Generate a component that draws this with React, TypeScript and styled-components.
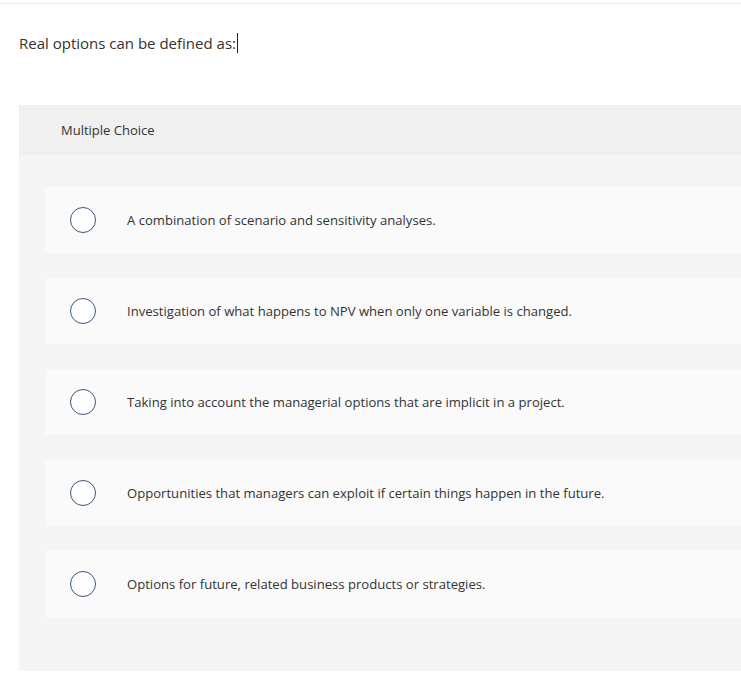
import React from "react";
import styled, { createGlobalStyle } from "styled-components";

const GlobalStyle = createGlobalStyle`
  html, body {
    margin: 0;
    padding: 0;
    background: #ffffff;
    font-family: "Open Sans", "Liberation Sans", sans-serif;
    color: #333333;
  }
`;

const Page = styled.div`
  width: 741px;
  height: 686px;
  overflow: hidden;
  border-top: 1px solid #ececec;
  margin-top: 3px;
  box-sizing: border-box;
`;

const Question = styled.div`
  padding: 6px 0 0 19px;
  height: 72px;
  box-sizing: border-box;
  font-size: 15px;
  color: #333;
  display: flex;
  align-items: center;
  line-height: 20px;
`;

const Cursor = styled.span`
  display: inline-block;
  width: 1px;
  height: 20px;
  background: #222;
  margin-left: 1px;
`;

const Panel = styled.div`
  margin: 29px 0 0 19px;
  background: #f5f5f5;
  padding-bottom: 54px;
`;

const PanelHeader = styled.div`
  height: 50px;
  background: #f0f0f0;
  display: flex;
  align-items: center;
  padding-left: 42px;
  font-size: 13px;
  color: #333;
`;

const OptionList = styled.div`
  display: flex;
  flex-direction: column;
  gap: 25px;
  padding: 32px 0 0 26px;
`;

const Option = styled.label`
  height: 66px;
  background: #fafafa;
  display: flex;
  align-items: center;
  padding-left: 25px;
  font-size: 13.1px;
  color: #333;
  cursor: pointer;
`;

const Radio = styled.span`
  width: 24px;
  height: 24px;
  border: 1.5px solid #3b5877;
  border-radius: 50%;
  background: #ffffff;
  flex-shrink: 0;
  margin-right: 31px;
`;

const options = [
  "A combination of scenario and sensitivity analyses.",
  "Investigation of what happens to NPV when only one variable is changed.",
  "Taking into account the managerial options that are implicit in a project.",
  "Opportunities that managers can exploit if certain things happen in the future.",
  "Options for future, related business products or strategies.",
];

const App: React.FC = () => {
  return (
    <Page>
      <GlobalStyle />
      <Question>
        Real options can be defined as:
        <Cursor />
      </Question>
      <Panel>
        <PanelHeader>Multiple Choice</PanelHeader>
        <OptionList>
          {options.map((text) => (
            <Option key={text}>
              <Radio />
              {text}
            </Option>
          ))}
        </OptionList>
      </Panel>
    </Page>
  );
};

export default App;
